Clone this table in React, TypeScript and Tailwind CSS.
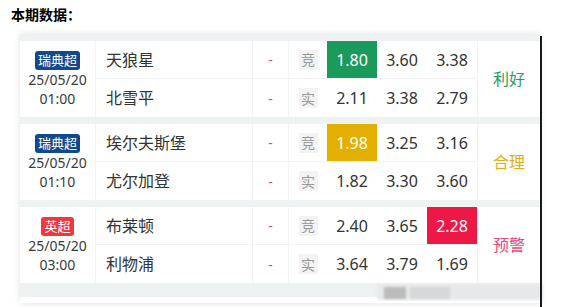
import React from 'react';

type Match = {
  league: string;
  leagueColor: string;
  date: string;
  time: string;
  home: string;
  away: string;
  jing: string[];
  shi: string[];
  hot: number;
  hotColor: string;
  result: string;
  resultColor: string;
};

const matches: Match[] = [
  {
    league: '瑞典超',
    leagueColor: 'bg-[#114a8c]',
    date: '25/05/20',
    time: '01:00',
    home: '天狼星',
    away: '北雪平',
    jing: ['1.80', '3.60', '3.38'],
    shi: ['2.11', '3.38', '2.79'],
    hot: 0,
    hotColor: 'bg-[#1a9a5b]',
    result: '利好',
    resultColor: 'text-[#2a9c5e]',
  },
  {
    league: '瑞典超',
    leagueColor: 'bg-[#114a8c]',
    date: '25/05/20',
    time: '01:10',
    home: '埃尔夫斯堡',
    away: '尤尔加登',
    jing: ['1.98', '3.25', '3.16'],
    shi: ['1.82', '3.30', '3.60'],
    hot: 0,
    hotColor: 'bg-[#e4b000]',
    result: '合理',
    resultColor: 'text-[#e4ae0c]',
  },
  {
    league: '英超',
    leagueColor: 'bg-[#f2383c]',
    date: '25/05/20',
    time: '03:00',
    home: '布莱顿',
    away: '利物浦',
    jing: ['2.40', '3.65', '2.28'],
    shi: ['3.64', '3.79', '1.69'],
    hot: 2,
    hotColor: 'bg-[#ee1847]',
    result: '预警',
    resultColor: 'text-[#e8497a]',
  },
];

const OddsRow = ({ team, tag, odds, hot, hotColor, bottom }: {
  team: string;
  tag: string;
  odds: string[];
  hot: number;
  hotColor: string;
  bottom?: boolean;
}) => (
  <div className={`flex h-[38px] ${bottom ? '' : 'border-b border-[#f1f3f4]'}`}>
    <div className="w-[157px] pl-[10px] flex items-center text-[16px] text-[#333] border-r border-[#f1f3f4]">
      {team}
    </div>
    <div className="w-[36px] flex items-center justify-center text-[14px] text-[#e2467a] border-r border-[#f1f3f4]">
      -
    </div>
    <div className="w-[38px] flex items-center justify-center">
      <span className="w-[19px] h-[20px] flex items-center justify-center bg-[#f3f3f3] text-[#999] text-[14px]">
        {tag}
      </span>
    </div>
    {odds.map((o, i) => (
      <div
        key={i}
        className={`w-[50px] flex items-center justify-center text-[16px] ${i === hot ? `${hotColor} text-white` : 'text-[#333]'}`}
      >
        {o}
      </div>
    ))}
  </div>
);

export default function App() {
  return (
    <div
      className="w-[561px] h-[307px] bg-white relative overflow-hidden"
      style={{ fontFamily: '"Noto Sans", "Noto Sans CJK SC", sans-serif' }}
    >
      <div className="h-[34px] pl-[11px] pt-[5px] text-[14px] font-bold text-black leading-[20px]">
        本期数据：
      </div>

      <div className="ml-[20px] w-[520px] bg-white shadow-[0_0_6px_rgba(0,0,0,0.13)] pb-[6px]">
        <div className="bg-[#eef2f3] pt-[7px] pb-[14px] flex flex-col gap-[7px]">
          {matches.map((m, idx) => (
            <div key={idx} className="flex bg-white h-[76px]">
              <div className="w-[76px] flex flex-col items-center justify-center border-r border-[#f1f3f4]">
                <span className={`${m.leagueColor} text-white text-[13px] leading-[19px] px-[3px] rounded-[3px]`}>
                  {m.league}
                </span>
                <div className="text-[14px] leading-[19px] text-[#3a3a3a] text-center">
                  <div>{m.date}</div>
                  <div>{m.time}</div>
                </div>
              </div>
              <div className="flex flex-col border-r border-[#f1f3f4]">
                <OddsRow team={m.home} tag="竞" odds={m.jing} hot={m.hot} hotColor={m.hotColor} />
                <OddsRow team={m.away} tag="实" odds={m.shi} hot={-1} hotColor="" bottom />
              </div>
              <div className={`flex-1 flex items-center justify-center text-[16px] ${m.resultColor}`}>
                {m.result}
              </div>
            </div>
          ))}
        </div>
      </div>

      {/* blurred watermark */}
      <div className="absolute left-[377px] top-[284px] w-[166px] h-[16px] bg-[#e6e8e9] blur-[1.5px]" />
      <div className="absolute left-[384px] top-[287px] w-[22px] h-[12px] bg-[#bcbcbc] blur-[1px]" />
      <div className="absolute left-[410px] top-[287px] w-[40px] h-[12px] bg-[#d6d8d9] blur-[1px]" />

      {/* screenshot edge line */}
      <div className="absolute left-[540px] top-[36px] w-[2px] h-[271px] bg-[#1a1a1a]" />
    </div>
  );
}
